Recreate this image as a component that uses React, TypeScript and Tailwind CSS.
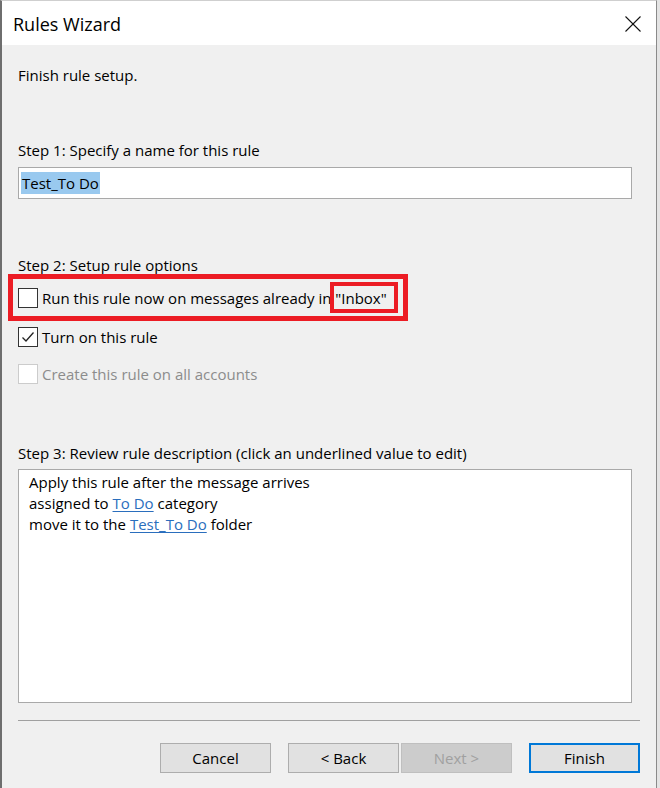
import React from "react";

function Checkbox({ checked, disabled }: { checked?: boolean; disabled?: boolean }) {
  return (
    <div
      className={
        "w-[20px] h-[20px] shrink-0 bg-white border flex items-center justify-center " +
        (disabled ? "border-[#cccccc]" : "border-[#333333]")
      }
    >
      {checked && (
        <svg width="16" height="16" viewBox="0 0 16 16">
          <polyline points="2.5,8.5 6,12 13.5,3.5" fill="none" stroke="#222" strokeWidth="1.3" />
        </svg>
      )}
    </div>
  );
}

export default function App() {
  return (
    <div className="w-[660px] h-[788px] bg-[#e4e4e4] flex font-['Open_Sans',sans-serif] text-black">
      <div className="w-[657px] h-full flex flex-col bg-[#f0f0f0] border-l-2 border-l-[#6e6e6e] border-r border-r-[#8a8a8a] border-t border-t-[#cfcfcf]">
        {/* Title bar */}
        <div className="h-[44px] bg-white flex items-center justify-between pl-[11px] pr-[15px] shrink-0">
          <span className="text-[18px] leading-[24px] mt-[2px]">Rules Wizard</span>
          <svg width="16" height="16" viewBox="0 0 16 16" className="mt-[2px]">
            <line x1="0.5" y1="0.5" x2="15.5" y2="15.5" stroke="#111" strokeWidth="1.1" />
            <line x1="15.5" y1="0.5" x2="0.5" y2="15.5" stroke="#111" strokeWidth="1.1" />
          </svg>
        </div>

        {/* Body */}
        <div className="flex flex-col pl-[16px] text-[15px] leading-[20px]">
          <div className="mt-[20px]">Finish rule setup.</div>

          <div className="mt-[55px]">Step 1: Specify a name for this rule</div>
          <div className="mt-[7px] w-[614px] h-[32px] bg-white border border-[#a9a9a9] flex items-center pl-[2px]">
            <span className="bg-[#99c9ef] leading-[22px] px-[1px]">Test_To Do</span>
          </div>

          <div className="mt-[56px]">Step 2: Setup rule options</div>

          <div className="relative mt-[13px] flex items-center gap-[4px] h-[20px]">
            <Checkbox />
            <span>Run this rule now on messages already in "Inbox"</span>
            <div className="absolute left-[-10px] top-[-14px] w-[400px] h-[47px] border-[5px] border-[#ec1c24]" />
            <div className="absolute left-[312px] top-[-6px] w-[68px] h-[31px] border-[4px] border-[#ec1c24]" />
          </div>

          <div className="mt-[19px] flex items-center gap-[4px] h-[20px]">
            <Checkbox checked />
            <span>Turn on this rule</span>
          </div>

          <div className="mt-[17px] flex items-center gap-[4px] h-[20px]">
            <Checkbox disabled />
            <span className="text-[#8c8c8c]">Create this rule on all accounts</span>
          </div>

          <div className="mt-[59px]">Step 3: Review rule description (click an underlined value to edit)</div>
          <div className="mt-[6px] w-[614px] h-[234px] bg-white border border-[#a9a9a9] pl-[10px] pt-[2px] leading-[21px]">
            <div>Apply this rule after the message arrives</div>
            <div>
              assigned to <span className="text-[#2a6ebd] underline underline-offset-2">To Do</span> category
            </div>
            <div>
              move it to the <span className="text-[#2a6ebd] underline underline-offset-2">Test_To Do</span> folder
            </div>
          </div>

          <div className="mt-[17px] w-[622px] h-px bg-[#a0a0a0]" />

          <div className="mt-[22px] w-[622px] flex justify-end">
            <button className="w-[111px] h-[30px] bg-[#e1e1e1] border border-[#adadad]">Cancel</button>
            <button className="ml-[17px] w-[111px] h-[30px] bg-[#e1e1e1] border border-[#adadad]">&lt; Back</button>
            <button className="ml-[2px] w-[111px] h-[30px] bg-[#cccccc] border border-[#bfbfbf] text-[#a0a0a0]">Next &gt;</button>
            <button className="ml-[17px] w-[111px] h-[30px] bg-[#e1e1e1] border-2 border-[#0078d7]">Finish</button>
          </div>
        </div>
      </div>
    </div>
  );
}
